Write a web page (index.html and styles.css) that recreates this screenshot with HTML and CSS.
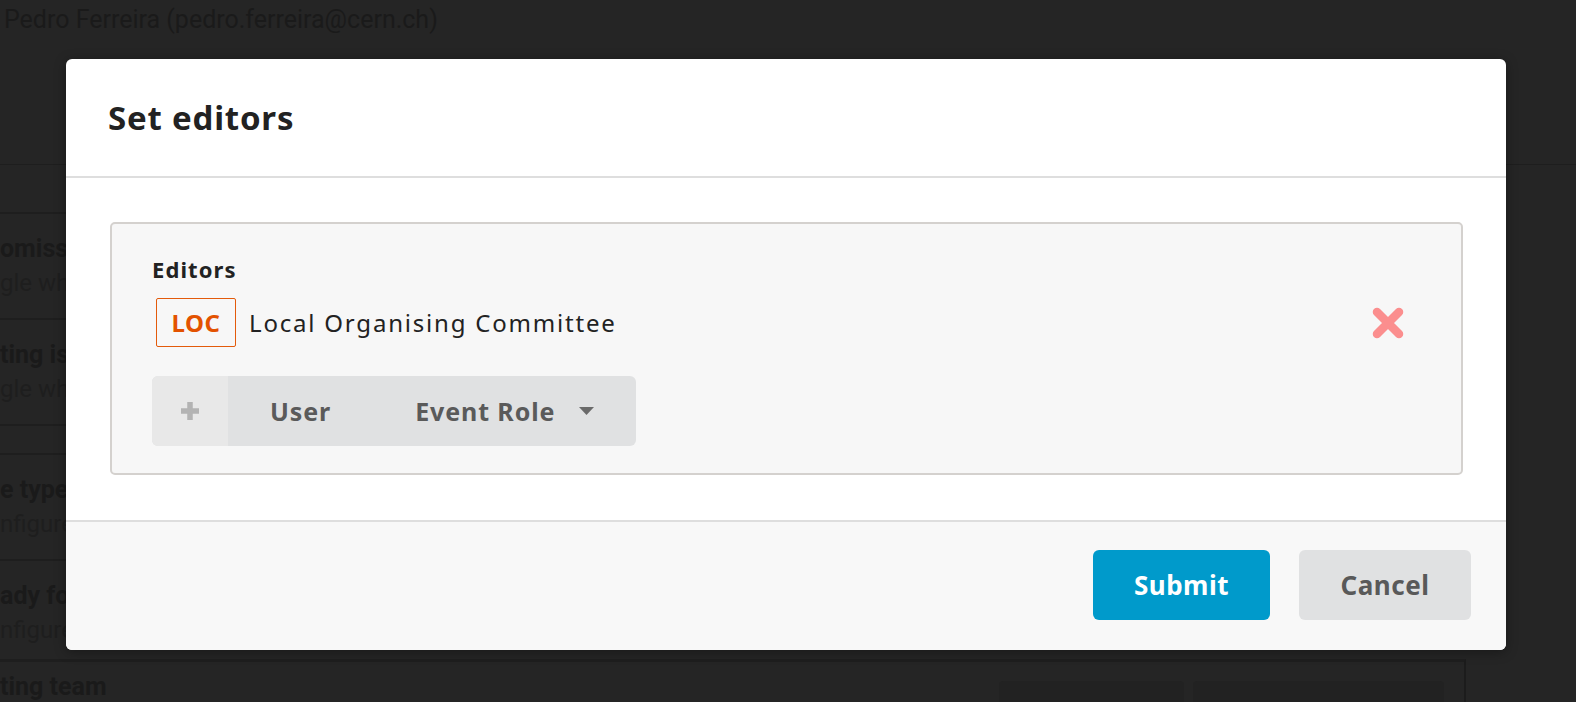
FILE: index.html
```html
<!DOCTYPE html>
<html>
<head>
<meta charset="utf-8">
<link rel="stylesheet" href="styles.css">
</head>
<body>
<div class="page">
  <div class="topbar">Pedro Ferreira (pedro.ferreira@cern.ch)</div>
  <div class="list">
    <div class="row"><div class="r-title">omissions</div><div class="r-sub">gle whether</div></div>
    <div class="row"><div class="r-title">ting is open</div><div class="r-sub">gle whether</div></div>
    <div class="row spacer"></div>
    <div class="row"><div class="r-title">e types</div><div class="r-sub">nfigure the</div></div>
    <div class="row short"><div class="r-title">ady for</div><div class="r-sub">nfigure the</div></div>
    <div class="row last">
      <div class="r-title">ting team</div>
      <div class="r-actions"><span class="bg-btn wide1"></span><span class="bg-btn wide2"></span></div>
    </div>
  </div>
</div>

<div class="modal">
  <div class="modal-header">Set editors</div>
  <div class="modal-content">
    <div class="field">
      <div class="field-label">Editors</div>
      <div class="entry">
        <span class="badge">LOC</span>
        <span class="entry-name">Local Organising Committee</span>
        <svg class="remove" width="34" height="34" viewBox="0 0 34 34">
          <path d="M6 6 L28 28 M28 6 L6 28" stroke="#fb8e8e" stroke-width="8.5" stroke-linecap="round"/>
        </svg>
      </div>
      <div class="btn-group">
        <span class="seg plus">
          <svg width="22" height="22" viewBox="0 0 22 22"><path d="M11 2 V20 M2 11 H20" stroke="#b3b3b3" stroke-width="5.5"/></svg>
        </span>
        <span class="seg">User</span>
        <span class="seg">Event Role <svg class="caret" width="15" height="8" viewBox="0 0 15 8"><path d="M0 0 H15 L7.5 8 Z" fill="#6a6a6a"/></svg></span>
      </div>
    </div>
  </div>
  <div class="modal-footer">
    <button class="btn primary">Submit</button>
    <button class="btn">Cancel</button>
  </div>
</div>
</body>
</html>
```

FILE: styles.css
```css
* { box-sizing: border-box; }
html, body { margin: 0; padding: 0; overflow: hidden; }
body {
  background: #252525;
  width: 1576px;
  height: 702px;
  font-family: Roboto, "Liberation Sans", sans-serif;
}
.page { color: #1b1b1b; height: 702px; overflow: hidden; }
.topbar {
  height: 165px;
  padding: 5px 0 0 4px;
  font-size: 25px;
  border-bottom: 1px solid #1e1e1e;
  color: #1a1a1a;
}
.list {
  margin-top: 47px;
  width: 1458px;
}
.row {
  height: 106px;
  border-top: 2px solid #1e1e1e;
  padding-top: 20px;
  display: flex;
  flex-direction: column;
  gap: 6px;
  overflow: hidden;
}
.row.spacer { height: 29px; padding: 0; }
.row.short { height: 100px; }
.row.last {
  height: 43px;
  width: 1466px;
  border-top-width: 3px;
  border-right: 2px solid #1c1c1c;
  flex-direction: row;
  justify-content: space-between;
  padding-top: 10px;
}
.r-title { font-weight: bold; font-size: 25px; color: #1a1a1a; white-space: nowrap; }
.r-sub { font-size: 24px; color: #1e1e1e; white-space: nowrap; }
.r-actions { display: flex; gap: 9px; padding-right: 20px; padding-top: 9px; }
.bg-btn { height: 40px; border-radius: 4px 4px 0 0; background: #222; }
.wide1 { width: 185px; }
.wide2 { width: 251px; }

.modal {
  position: absolute;
  left: 66px;
  top: 59px;
  width: 1440px;
  height: 591px;
  background: #fff;
  border-radius: 6px;
  box-shadow: 0 2px 12px rgba(0,0,0,0.35);
  font-family: "Noto Sans", "Open Sans", sans-serif;
  overflow: hidden;
  display: flex;
  flex-direction: column;
}
.modal-header {
  height: 119px;
  padding: 0 42px;
  display: flex;
  align-items: center;
  font-size: 33px;
  letter-spacing: 0.8px;
  font-weight: bold;
  color: #222;
  border-bottom: 2px solid #dedede;
}
.modal-content { padding: 44px 43px 45px 44px; }
.field {
  height: 253px;
  background: #f7f7f7;
  border: 2px solid #d4d1ce;
  border-radius: 5px;
  padding: 30px 40px 0 40px;
}
.field-label { font-size: 22px; letter-spacing: 1.1px; font-weight: bold; color: #222; line-height: 30px; }
.entry {
  margin-top: 14px;
  display: flex;
  align-items: center;
  height: 49px;
  padding-left: 4px;
}
.badge {
  width: 80px;
  height: 49px;
  border: 1.5px solid #e35b0b;
  border-radius: 2px;
  color: #e35200;
  font-weight: bold;
  font-size: 24px;
  letter-spacing: 0.5px;
  display: flex;
  align-items: center;
  justify-content: center;
}
.entry-name { margin-left: 13px; font-size: 24px; color: #222; letter-spacing: 1.8px; }
.remove { margin-left: auto; margin-right: 16px; }
.btn-group {
  margin-top: 29px;
  display: inline-flex;
  height: 70px;
  border-radius: 6px;
  overflow: hidden;
  background: #e0e1e2;
}
.seg {
  display: flex;
  align-items: center;
  padding: 0 42px;
  font-size: 25px;
  letter-spacing: 0.9px;
  font-weight: bold;
  color: #5a5a5a;
}
.seg.plus { background: #e8e8e8; width: 76px; padding: 0; justify-content: center; }
.caret { margin-left: 24px; }
.modal-footer {
  flex: 1;
  background: #f8f8f8;
  border-top: 2px solid #dedede;
  display: flex;
  justify-content: flex-end;
  align-items: center;
  gap: 29px;
  padding: 0 35px 2px 0;
}
.btn {
  height: 70px;
  border: 0;
  border-radius: 6px;
  background: #e0e1e2;
  color: #595959;
  font-family: "Noto Sans", "Open Sans", sans-serif;
  font-weight: bold;
  font-size: 26px;
  letter-spacing: 0.5px;
  width: 172px;
}
.btn.primary { background: #009acb; color: #fff; width: 177px; }
```
